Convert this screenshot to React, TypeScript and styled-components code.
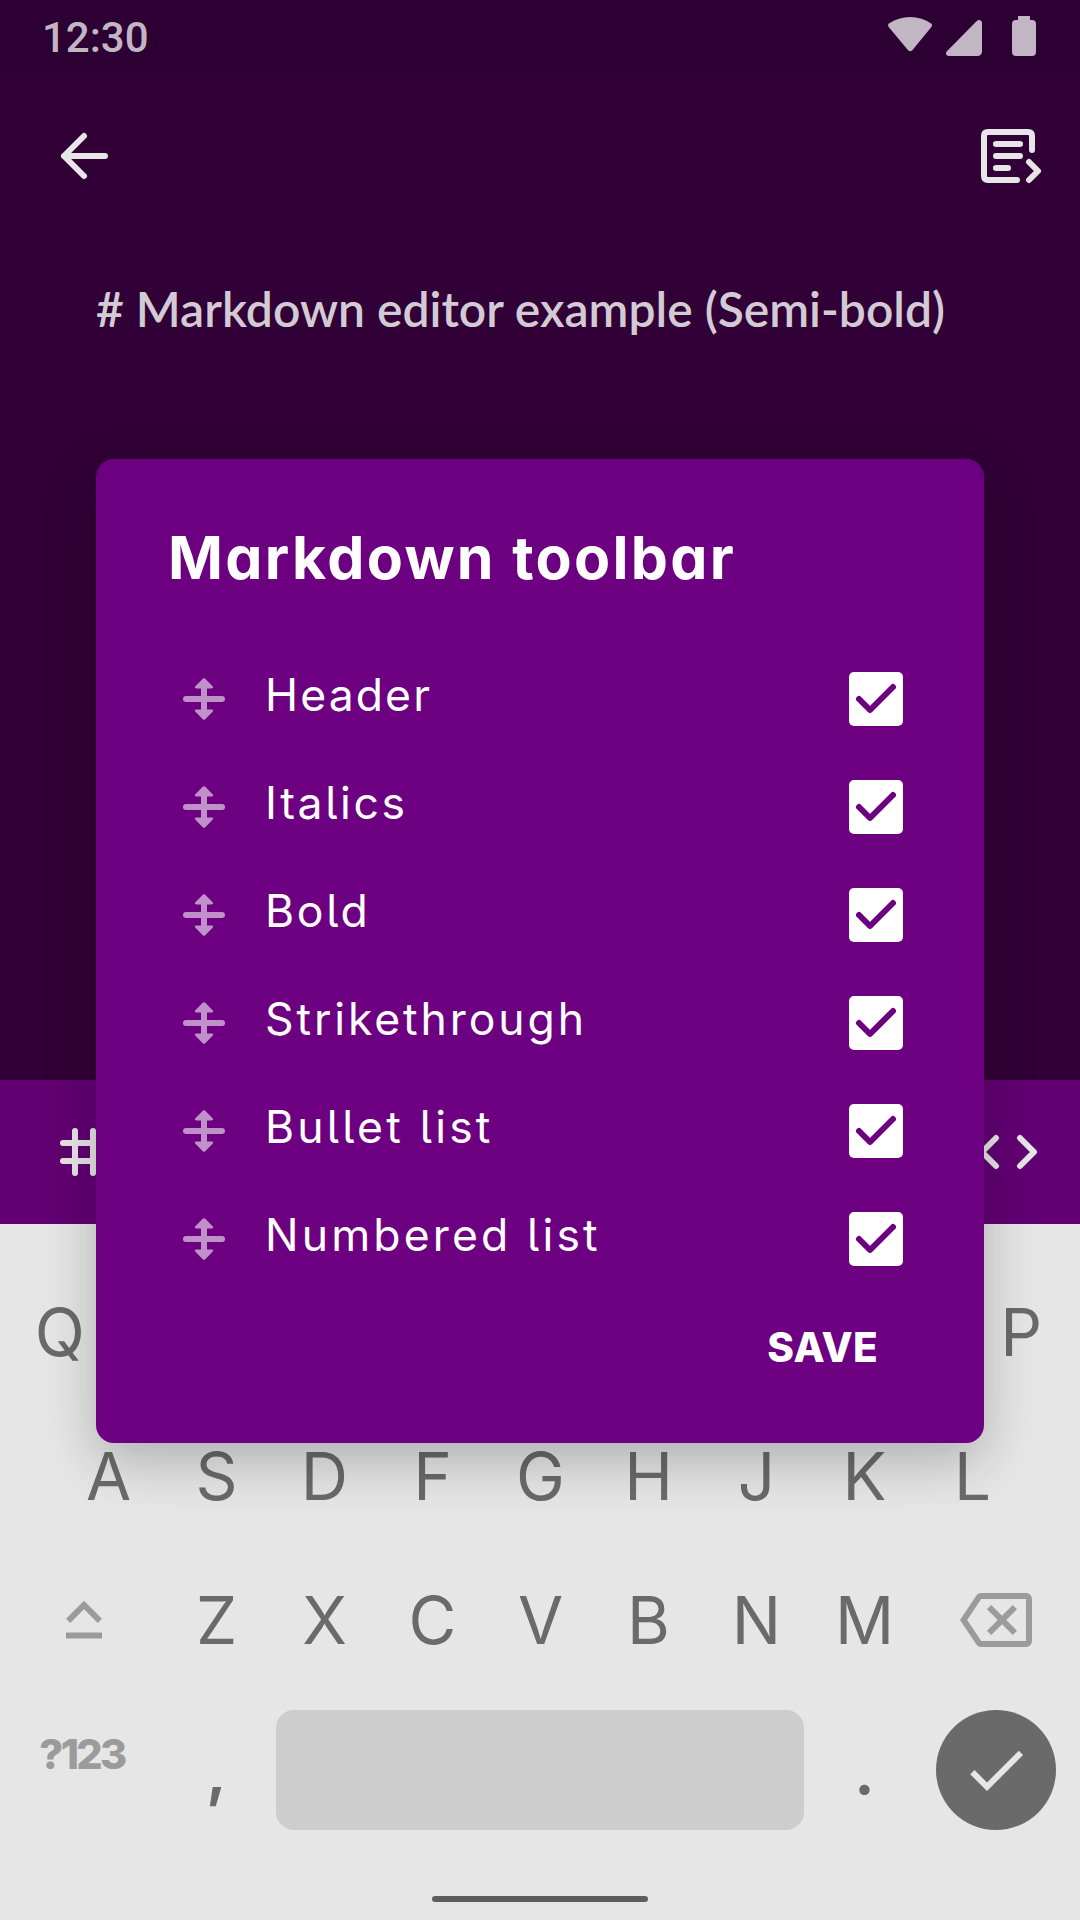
import React from "react";
import styled, { createGlobalStyle } from "styled-components";

const color = {
  background: "#310036",
  statusBar: "#2d0033",
  statusContent: "#c3b6c4",
  icon: "#e6e6e6",
  editorText: "#d3cbd4",
  toolbar: "#620073",
  card: "#6d0080",
  handle: "#c090ca",
  keyboard: "#e6e6e6",
  key: "#6a6a6a",
  keyMuted: "#9b9b9b",
  space: "#cdcdcd",
  home: "#5b5d5a",
};

const GlobalStyle = createGlobalStyle`
  *, *::before, *::after { box-sizing: border-box; }
  body { margin: 0; background: ${color.background}; font-family: Inter, "Liberation Sans", sans-serif; }
  button { font: inherit; color: inherit; background: none; border: 0; padding: 0; }
  svg { display: block; flex: none; }
`;

const Screen = styled.main`
  position: relative;
  display: flex;
  flex-direction: column;
  width: 1080px;
  height: 1920px;
  overflow: hidden;
  background: ${color.background};
`;

const StatusBar = styled.header`
  display: flex;
  align-items: center;
  justify-content: space-between;
  height: 72px;
  padding: 0 36px 0 42px;
  background: ${color.statusBar};
  color: ${color.statusContent};
`;

const Clock = styled.time`
  font: 500 42px/60px Roboto, sans-serif;
  padding-top: 4px;
`;

const AppBar = styled.nav`
  display: flex;
  align-items: center;
  justify-content: space-between;
  height: 168px;
  padding: 0 33px 0 48px;
  color: ${color.icon};
`;

const IconButton = styled.button`
  display: flex;
`;

const Editor = styled.section`
  flex: 1;
  padding: 41px 96px 0;
`;

const EditorLine = styled.p`
  margin: 0;
  font: 600 48px/56px Lato, sans-serif;
  white-space: nowrap;
  color: ${color.editorText};
`;

const FormatBar = styled.div`
  display: flex;
  align-items: center;
  justify-content: space-between;
  height: 144px;
  padding: 0 36px 0 48px;
  background: ${color.toolbar};
  color: ${color.icon};
`;

const Keyboard = styled.section`
  height: 696px;
  padding-top: 36px;
  background: ${color.keyboard};
`;

const KeyRow = styled.div<{ $inset?: number; $height?: number }>`
  display: flex;
  height: ${(p) => p.$height ?? 144}px;
  padding: 0 ${(p) => p.$inset ?? 0}px;
`;

const Key = styled.button`
  display: flex;
  flex: 1 1 0;
  align-items: center;
  justify-content: center;
  padding: 2px 0 0 1px;
  font-size: 65.5px;
  line-height: 1;
  color: ${color.key};
`;

const PunctuationKey = styled(Key)`
  flex: 0 0 108px;
  font-weight: 600;
`;

const SideKey = styled.button<{ $side: "left" | "right" }>`
  display: flex;
  flex: 0 0 162px;
  align-items: center;
  justify-content: center;
  padding: ${(p) => (p.$side === "left" ? "0 0 0 6px" : "0 6px 0 0")};
  color: ${color.keyMuted};
`;

const SymbolsLabel = styled.span`
  padding: 0 4px 31px 0;
  font-size: 41.5px;
  font-weight: 800;
  line-height: 1;
  letter-spacing: -2.7px;
`;

const SpaceKey = styled.button`
  flex: 1;
  align-self: center;
  height: 120px;
  margin: 0 6px;
  border-radius: 18px;
  background: ${color.space};
`;

const DoneCircle = styled.span`
  display: flex;
  align-items: center;
  justify-content: center;
  width: 120px;
  height: 120px;
  border-radius: 50%;
  background: ${color.key};
  color: ${color.keyboard};
`;

const HomeIndicator = styled.div`
  width: 216px;
  height: 6px;
  margin: 48px auto 0;
  border-radius: 3px;
  background: ${color.home};
`;

const Dialog = styled.section`
  position: absolute;
  top: 459px;
  left: 96px;
  display: flex;
  flex-direction: column;
  width: 888px;
  height: 984px;
  padding: 63px 81px 0 72px;
  border-radius: 18px;
  background: ${color.card};
  color: #fff;
  box-shadow: 0 18px 54px rgba(0, 0, 0, 0.24);
`;

const DialogTitle = styled.h2`
  margin: 0 0 51px;
  font-size: 59px;
  font-weight: 700;
  line-height: 72px;
  letter-spacing: 2.3px;
  white-space: nowrap;
  font-feature-settings: "cv11";
`;

const Options = styled.ul`
  margin: 0;
  padding: 0;
  list-style: none;
`;

const Option = styled.li`
  display: flex;
  align-items: center;
  height: 108px;
`;

const OptionLabel = styled.span<{ $tracking: number }>`
  flex: 1;
  padding: 0 0 9px 25px;
  font-size: 44.5px;
  font-weight: 400;
  line-height: 60px;
  letter-spacing: ${(p) => p.$tracking}px;
  font-feature-settings: "cv05";
`;

const CheckBox = styled.span`
  display: flex;
  width: 54px;
  height: 54px;
  border-radius: 5px;
  background: #fff;
  color: ${color.card};
`;

const SaveButton = styled.button`
  align-self: flex-end;
  height: 109px;
  margin-right: 25px;
  font-size: 40.5px;
  font-weight: 800;
  letter-spacing: 0.3px;
`;

const WifiIcon = () => (
  <svg width="44" height="35" viewBox="0 0 44 35" fill="currentColor">
    <path d="M.9 6.600C7 2.200 14.300 0 22.200 0S37.200 2.200 43.100 6.600Q44.700 8 43.400 9.900L24.300 33.300Q22.200 35.200 20.100 33.300L.7 9.900Q-.6 8 .9 6.600Z" />
  </svg>
);

const SignalIcon = () => (
  <svg width="36" height="36" viewBox="0 0 36 36" fill="currentColor">
    <path d="M30.800 1.100C32.700-.8 36 .2 36 3v28.500A4.500 4.500 0 0 1 31.500 36H3C.2 36-1 33.200.9 31.300Z" />
  </svg>
);

const BatteryIcon = () => (
  <svg width="24" height="40" viewBox="0 0 24 40" fill="currentColor">
    <path d="M6 0h12v4h2a4 4 0 0 1 4 4v28a4 4 0 0 1-4 4H4a4 4 0 0 1-4-4V8a4 4 0 0 1 4-4h2Z" />
  </svg>
);

const StatusIcons = styled.div`
  display: flex;
  align-items: flex-end;
  height: 40px;
  margin-right: 8px;

  svg:nth-child(1) { margin: 0 14px 4px 0; }
  svg:nth-child(2) { margin-right: 30px; }
`;

const Stroke = ({
  size = 72,
  children,
}: {
  size?: number;
  children: React.ReactNode;
}) => (
  <svg
    width={size}
    height={size}
    viewBox={`0 0 ${size} ${size}`}
    fill="none"
    stroke="currentColor"
    strokeWidth="6"
    strokeLinecap="round"
    strokeLinejoin="round"
  >
    {children}
  </svg>
);

const BackIcon = () => (
  <Stroke>
    <path d="M36 16 16 36l20 20M16 36h41" />
  </Stroke>
);

const PreviewIcon = () => (
  <Stroke>
    <path d="M57 30V16q0-4-4-4H13q-4 0-4 4v40q0 4 4 4h29M21 24h24M21 36h24M21 48h12M54 42l9 9-9 9" />
  </Stroke>
);

const HashIcon = () => (
  <Stroke>
    <path d="M27 15v42M45 15v42M15 27h42M15 45h42" />
  </Stroke>
);

const CodeIcon = () => (
  <Stroke>
    <path d="m24 22-14 14 14 14M48 22l14 14-14 14" />
  </Stroke>
);

const DragHandle = () => (
  <svg width="72" height="72" viewBox="0 0 72 72" fill={color.handle}>
    <rect x="15" y="33" width="42" height="6" rx="3" />
    <path d="M33 25.500h-5q-2-.6-.6-2.200l7.600-7.700q1-.9 2 0l7.600 7.700q1.400 1.600-.6 2.200h-5v21h5q2 .6.600 2.200L37 56.400q-1 .9-2 0l-7.600-7.700q-1.400-1.600.6-2.200h5Z" />
  </svg>
);

const CheckIcon = () => (
  <Stroke size={54}>
    <path d="m10 27 11 11 23-23" />
  </Stroke>
);

const Glyph = ({ d }: { d: string }) => (
  <svg width="72" height="72" viewBox="0 0 24 24" fill="currentColor">
    <path d={d} />
  </svg>
);

const SHIFT = "M12 8.410 16.590 13 18 11.590l-6-6-6 6L7.410 13 12 8.410ZM6 18.200h12v-2H6v2Z";
const BACKSPACE =
  "M22 3H7c-.69 0-1.230.35-1.590.88L0 12l5.410 8.110c.36.53.9.89 1.590.89h15c1.100 0 2-.9 2-2V5c0-1.100-.9-2-2-2Zm0 16H7.070L2.400 12l4.660-7H22v14Zm-11.590-2L14 13.410 17.590 17 19 15.590 15.410 12 19 8.410 17.590 7 14 10.590 10.410 7 9 8.410 12.590 12 9 15.590Z";
const DONE = "M9 16.170 4.830 12l-1.420 1.410L9 19 21 7l-1.410-1.410L9 16.170Z";

const options = [
  { label: "Header", tracking: 2.1 },
  { label: "Italics", tracking: 2.6 },
  { label: "Bold", tracking: 2.7 },
  { label: "Strikethrough", tracking: 2.9 },
  { label: "Bullet list", tracking: 3.2 },
  { label: "Numbered list", tracking: 3.15 },
];

// Spaces stand for keys that stay blank while the dialog covers them.
const letters = (row: string) =>
  row.split("").map((c, i) => <Key key={i}>{c.trim()}</Key>);

export default function App() {
  return (
    <>
      <GlobalStyle />
      <Screen>
        <StatusBar>
          <Clock>12:30</Clock>
          <StatusIcons>
            <WifiIcon />
            <SignalIcon />
            <BatteryIcon />
          </StatusIcons>
        </StatusBar>
        <AppBar>
          <IconButton aria-label="Back"><BackIcon /></IconButton>
          <IconButton aria-label="Preview"><PreviewIcon /></IconButton>
        </AppBar>
        <Editor>
          <EditorLine># Markdown editor example (Semi-bold)</EditorLine>
        </Editor>
        <FormatBar>
          <IconButton aria-label="Header"><HashIcon /></IconButton>
          <IconButton aria-label="Code"><CodeIcon /></IconButton>
        </FormatBar>
        <Keyboard>
          <KeyRow $inset={6}>{letters("Q        P")}</KeyRow>
          <KeyRow $inset={54}>{letters("ASDFGHJKL")}</KeyRow>
          <KeyRow>
            <SideKey $side="left" aria-label="Shift"><Glyph d={SHIFT} /></SideKey>
            {letters("ZXCVBNM")}
            <SideKey $side="right" aria-label="Backspace"><Glyph d={BACKSPACE} /></SideKey>
          </KeyRow>
          <KeyRow $height={156}>
            <SideKey $side="left"><SymbolsLabel>?123</SymbolsLabel></SideKey>
            <PunctuationKey>,</PunctuationKey>
            <SpaceKey aria-label="Space" />
            <PunctuationKey>.</PunctuationKey>
            <SideKey $side="right" aria-label="Done">
              <DoneCircle><Glyph d={DONE} /></DoneCircle>
            </SideKey>
          </KeyRow>
          <HomeIndicator />
        </Keyboard>
        <Dialog role="dialog">
          <DialogTitle>Markdown toolbar</DialogTitle>
          <Options>
            {options.map((o) => (
              <Option key={o.label}>
                <DragHandle />
                <OptionLabel $tracking={o.tracking}>{o.label}</OptionLabel>
                <CheckBox role="checkbox" aria-checked="true"><CheckIcon /></CheckBox>
              </Option>
            ))}
          </Options>
          <SaveButton>SAVE</SaveButton>
        </Dialog>
      </Screen>
    </>
  );
}
